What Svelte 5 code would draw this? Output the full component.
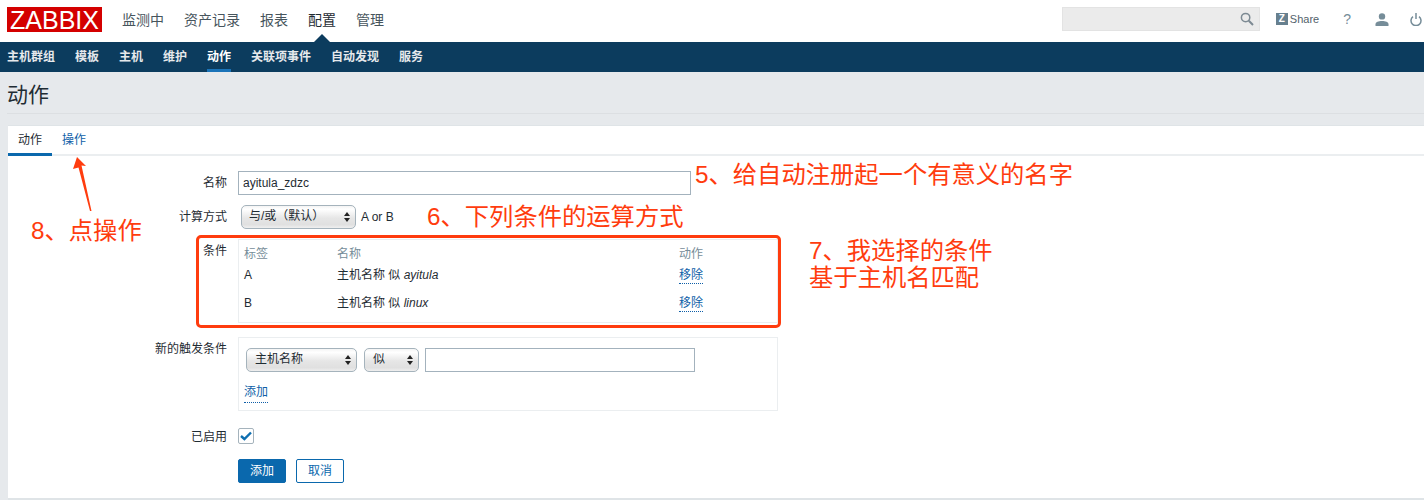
<script>
	const mainNav = ['监测中', '资产记录', '报表', '配置', '管理'];
	const subNav = ['主机群组', '模板', '主机', '维护', '动作', '关联项事件', '自动发现', '服务'];
	const conditions = [
		{ tag: 'A', value: 'ayitula' },
		{ tag: 'B', value: 'linux' }
	];
</script>

<div class="page">
	<header class="top">
		<div class="logo">ZABBIX</div>
		<nav class="main-nav">
			{#each mainNav as item}
				<span class:current={item === '配置'}>{item}</span>
			{/each}
		</nav>
		<div class="top-right">
			<div class="search">
				<svg width="14" height="14" viewBox="0 0 14 14" fill="none" stroke="#7d8a93" stroke-width="1.5">
					<circle cx="5.6" cy="5.6" r="4.2" />
					<path d="M8.8 8.8 13 13" stroke-width="2" />
				</svg>
			</div>
			<div class="share"><span class="z">Z</span>Share</div>
			<span class="help">?</span>
			<svg class="user" width="14" height="13" viewBox="0 0 14 13" fill="#768d99">
				<circle cx="7" cy="3.4" r="3.2" />
				<path d="M0.5 13V11.2C0.5 9 3.5 8 7 8s6.500 1 6.500 3.200V13Z" />
			</svg>
			<svg class="power" width="12" height="13" viewBox="0 0 12 13" fill="none" stroke="#768d99" stroke-width="1.500">
				<path d="M3 3.600A5 5 0 1 0 9 3.600" />
				<path d="M6 0V6" />
			</svg>
		</div>
	</header>

	<nav class="sub-nav">
		{#each subNav as item}
			<span class:active={item === '动作'}>{item}</span>
		{/each}
	</nav>

	<div class="title"><h1>动作</h1></div>

	<main class="panel">
		<div class="tabs">
			<span class="tab active">动作</span>
			<span class="tab">操作</span>
		</div>

		<form class="form">
			<div class="row row-name">
				<span class="label">名称</span>
				<div class="input name-input">ayitula_zdzc</div>
			</div>
			<div class="row row-calc">
				<span class="label">计算方式</span>
				<div class="calc">
					<div class="select calc-select">与/或（默认）<i class="updown"></i></div>
					<span class="formula">A or B</span>
				</div>
			</div>
			<div class="row row-cond">
				<span class="label">条件</span>
				<div class="box cond-box">
					<div class="cond-row cond-head"><span>标签</span><span>名称</span><span>动作</span></div>
					{#each conditions as c}
						<div class="cond-row">
							<span>{c.tag}</span>
							<span>主机名称 似 <em>{c.value}</em></span>
							<span><a class="link">移除</a></span>
						</div>
					{/each}
				</div>
			</div>
			<div class="row row-new">
				<span class="label">新的触发条件</span>
				<div class="box new-box">
					<div class="new-fields">
						<div class="select host-select">主机名称<i class="updown"></i></div>
						<div class="select like-select">似<i class="updown"></i></div>
						<div class="input value-input"></div>
					</div>
					<a class="link add-link">添加</a>
				</div>
			</div>
			<div class="row row-check">
				<span class="label">已启用</span>
				<div class="check">
					<svg width="12" height="10" viewBox="0 0 12 10" fill="none" stroke="#0f6fb0" stroke-width="2.400">
						<path d="M1 5 4.400 8 11 1.500" />
					</svg>
				</div>
			</div>
			<div class="row row-buttons">
				<span></span>
				<div class="buttons">
					<div class="btn primary">添加</div>
					<div class="btn">取消</div>
				</div>
			</div>
		</form>
	</main>

	<!-- annotations drawn over the screenshot -->
	<div class="note n5">5、给自动注册起一个有意义的名字</div>
	<div class="note n6">6、下列条件的运算方式</div>
	<div class="note n7">7、我选择的条件<br />基于主机名匹配</div>
	<div class="note n8">8、点操作</div>
	<div class="red-box"></div>
	<svg class="arrow" width="24" height="60" viewBox="0 0 24 60">
		<path d="M7 2 16 11 11.500 10.500 21.500 56 20 56 8.500 12.500 3 14Z" fill="#ff3c0e" />
	</svg>
</div>

<style>
	:global(body) {
		margin: 0;
		background: #e6e9ec;
	}
	.page {
		position: relative;
		width: 1424px;
		height: 500px;
		overflow: hidden;
		font-family: "Liberation Sans", "Noto Sans CJK SC", sans-serif;
		font-size: 12px;
		color: #1f2c33;
		background: #e6e9ec;
	}
	.top {
		height: 42px;
		background: #fff;
		display: flex;
		align-items: center;
		box-sizing: border-box;
		padding-left: 7px;
	}
	.logo {
		width: 95px;
		height: 25px;
		background: #d40000;
		color: #fff;
		font-size: 25px;
		line-height: 26px;
		text-align: center;
		margin-top: -3px;
	}
	.main-nav {
		display: flex;
		gap: 20px;
		margin-left: 20px;
		margin-top: -5px;
		font-size: 14px;
		color: #47555d;
	}
	.main-nav .current {
		position: relative;
		color: #1f2c33;
	}
	.main-nav .current::after {
		content: '';
		position: absolute;
		left: 6px;
		bottom: -13px;
		border: 8px solid transparent;
		border-top: 0;
		border-bottom-color: #0c3c5e;
	}
	.top-right {
		margin-left: auto;
		display: flex;
		align-items: center;
		margin-top: -4px;
	}
	.search {
		width: 198px;
		height: 24px;
		box-sizing: border-box;
		background: #ebebeb;
		border: 1px solid #e3e3e3;
		display: flex;
		align-items: center;
		justify-content: flex-end;
		padding-right: 5px;
	}
	.share {
		display: flex;
		align-items: center;
		margin-left: 16px;
		font-size: 11px;
		color: #53626b;
	}
	.z {
		width: 12px;
		height: 12px;
		margin-right: 2px;
		background: #67808f;
		color: #fff;
		font-size: 10px;
		font-weight: bold;
		line-height: 12px;
		text-align: center;
	}
	.help {
		margin-left: 24px;
		font-size: 14px;
		color: #768d99;
	}
	.user {
		margin-left: 24px;
	}
	.power {
		margin-left: 21px;
		margin-right: 2px;
	}
	.sub-nav {
		height: 30px;
		background: #0c3c5e;
		display: flex;
		gap: 20px;
		padding-left: 7px;
		color: #e6e9ec;
		font-weight: bold;
		line-height: 30px;
	}
	.sub-nav span {
		height: 30px;
		box-sizing: border-box;
	}
	.sub-nav .active {
		color: #fff;
		border-bottom: 3px solid #1a73b8;
	}
	.title {
		height: 41px;
		margin-left: 7px;
		border-bottom: 1px solid #dcdfe2;
	}
	h1 {
		margin: 0;
		font-size: 21px;
		font-weight: normal;
		line-height: 46px;
		color: #1f2c33;
	}
	.panel {
		margin: 11px 0 0 8px;
		height: 372px;
		background: #fff;
		border-top: 1px solid #dfe4e7;
		border-bottom: 2px solid #dfe4e7;
	}
	.tabs {
		display: flex;
		height: 28px;
		border-bottom: 2px solid #ebeef0;
	}
	.tab {
		padding: 0 10px;
		line-height: 28px;
		color: #0f5fa8;
		height: 28px;
		box-sizing: border-box;
	}
	.tab.active {
		color: #1f2c33;
		border-bottom: 3px solid #0a68ad;
		height: 30px;
	}
	.form {
		display: flex;
		flex-direction: column;
		padding-top: 15px;
	}
	.row {
		display: grid;
		grid-template-columns: 219px 1fr;
		column-gap: 11px;
	}
	.label {
		text-align: right;
		line-height: 24px;
	}
	.input {
		box-sizing: border-box;
		height: 24px;
		border: 1px solid #a3b2bd;
		background: #fff;
		padding-left: 4px;
		font-size: 12px;
		line-height: 22px;
	}
	.name-input {
		width: 453px;
	}
	.row-calc {
		margin-top: 10px;
	}
	.calc {
		display: flex;
		align-items: center;
		margin-left: 3px;
	}
	.select {
		position: relative;
		box-sizing: border-box;
		height: 24px;
		border: 1px solid #a5b3bc;
		border-radius: 5px;
		background: linear-gradient(#f4f4f4, #fff 15%, #e6e6e6 55%, #e0e0e0 85%, #efefef);
		padding-left: 8px;
		line-height: 21px;
	}
	.updown {
		position: absolute;
		right: 5px;
		top: 6px;
		width: 0;
		border: 3px solid transparent;
		border-top: 0;
		border-bottom: 4px solid #222;
	}
	.updown::after {
		content: '';
		position: absolute;
		left: -3px;
		top: 6px;
		border: 3px solid transparent;
		border-bottom: 0;
		border-top: 4px solid #222;
	}
	.calc-select {
		width: 115px;
		padding-left: 7px;
	}
	.formula {
		margin-left: 5px;
	}
	.box {
		border: 1px solid #ebeef0;
		box-sizing: border-box;
		width: 540px;
	}
	.row-cond {
		margin-top: 10px;
	}
	.cond-box {
		height: 84px;
		padding: 6px 5px 5px;
	}
	.row-cond .label,
	.row-new .label {
		line-height: 20px;
		padding-top: 2px;
	}
	.cond-row {
		display: grid;
		grid-template-columns: 93px 342px 1fr;
		height: 28px;
		line-height: 25px;
	}
	.cond-head {
		height: 17px;
		line-height: 17px;
		color: #768d99;
	}
	em {
		font-style: italic;
	}
	.link {
		color: #0f5fa8;
		border-bottom: 1px dotted #0f5fa8;
		padding-bottom: 1px;
	}
	.row-new {
		margin-top: 14px;
	}
	.new-box {
		height: 74px;
		padding: 10px 0 0 7px;
	}
	.new-fields {
		display: flex;
		gap: 7px;
	}
	.host-select {
		width: 111px;
	}
	.like-select {
		width: 55px;
	}
	.value-input {
		width: 270px;
		margin-left: -1px;
	}
	.add-link {
		display: inline-block;
		margin: 12px 0 0 -2px;
		line-height: 17px;
	}
	.row-check {
		margin-top: 13px;
	}
	.row-check .label {
		line-height: 26px;
	}
	.check {
		box-sizing: border-box;
		width: 16px;
		height: 16px;
		border: 1px solid #a5b3bc;
		border-radius: 2px;
		display: flex;
		align-items: center;
		justify-content: center;
		margin-top: 4px;
	}
	.row-buttons {
		margin-top: 9px;
	}
	.buttons {
		display: flex;
		gap: 10px;
	}
	.btn {
		box-sizing: border-box;
		width: 48px;
		height: 24px;
		border: 1px solid #0a68ad;
		border-radius: 2px;
		color: #0a68ad;
		text-align: center;
		line-height: 23px;
	}
	.btn.primary {
		background: #0a68ad;
		color: #fff;
	}
	.note {
		position: absolute;
		color: #ff3c0e;
		font-size: 24.3px;
		line-height: 27px;
		white-space: nowrap;
	}
	.n5 { left: 695px; top: 161px; }
	.n6 { left: 427px; top: 203px; }
	.n7 { left: 809px; top: 237px; }
	.n8 { left: 31px; top: 217px; }
	.red-box {
		position: absolute;
		left: 196px;
		top: 235px;
		width: 585px;
		height: 93px;
		box-sizing: border-box;
		border: 3px solid #ff3c0e;
		border-radius: 5px;
	}
	.arrow {
		position: absolute;
		left: 70px;
		top: 155px;
	}
</style>
